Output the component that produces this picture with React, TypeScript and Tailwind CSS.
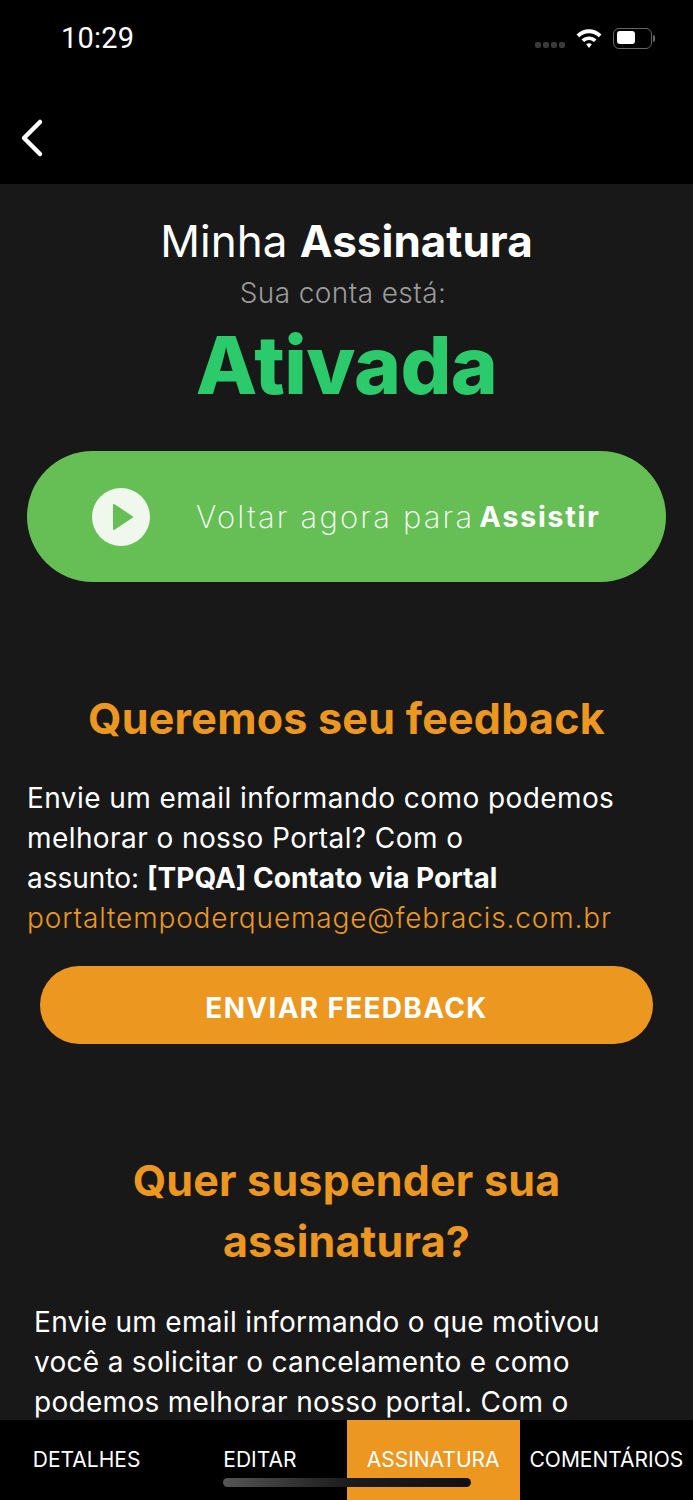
import React from 'react';

const tabs = ['DETALHES', 'EDITAR', 'ASSINATURA', 'COMENTÁRIOS'];

const StatusIcons = () => (
  <div className="flex items-center">
    <div className="flex gap-[2px] mt-[14px] mr-[10px]">
      {[0, 1, 2, 3].map((i) => (
        <div key={i} className="w-[6px] h-[6px] rounded-[2px] bg-[#3a3a3a]" />
      ))}
    </div>
    <svg width="28" height="24" viewBox="0 0 28 24" className="mr-[10px]">
      <path d="M1.5 8.5C8.5 1.5 19.5 1.5 26.5 8.5L23.8 11.3C18.2 5.9 9.8 5.9 4.2 11.3Z" fill="#fff" />
      <path d="M6.5 13.5C10.8 9.4 17.2 9.4 21.5 13.5L18.9 16.1C16 13.4 12 13.4 9.1 16.1Z" fill="#fff" />
      <path d="M11.2 18.2C12.9 16.8 15.1 16.8 16.8 18.2L14 22Z" fill="#fff" />
    </svg>
    <div className="box-border w-[39px] h-[21px] border-[1.5px] border-[#666] rounded-[6px] p-[2.5px]">
      <div className="w-[18px] h-[13px] rounded-[3px] bg-white" />
    </div>
    <div className="w-[2px] h-[7px] ml-[1px] bg-[#666] rounded-r-[2px]" />
  </div>
);

export default function App() {
  return (
    <div className="relative w-[693px] h-[1500px] flex flex-col overflow-hidden bg-[#181818] text-white font-['Inter','Liberation_Sans',sans-serif]">
      <header className="h-[184px] shrink-0 bg-black">
        <div className="flex items-center justify-between pt-[22px] pl-[61px] pr-[38px] h-[54px]">
          <span className="text-[29px] leading-[32px] tracking-[0.2px] font-['Roboto',sans-serif]">10:29</span>
          <StatusIcons />
        </div>
        <div className="pl-[18px] pt-[64px]">
          <svg width="30" height="40" viewBox="0 0 30 40" fill="none" stroke="#fff" strokeWidth="4.5" strokeLinecap="round" strokeLinejoin="round">
            <path d="M22 4L6 20L22 36" />
          </svg>
        </div>
      </header>

      <main className="flex-1 min-h-0 overflow-hidden">
        <div className="pt-[30px] text-center">
          <h1 className="text-[44px] leading-[54px]">
            Minha <span className="font-bold">Assinatura</span>
          </h1>
          <p className="mt-[7px] pr-[7px] text-[28px] leading-[36px] tracking-[0.4px] text-[#9a9a9a] font-light">Sua conta está:</p>
          <p className="mt-[2px] text-[80px] leading-[104px] font-extrabold tracking-[-0.6px] text-[#2bcb6c]">Ativada</p>
        </div>

        <button className="flex items-center ml-[27px] mt-[34px] w-[639px] h-[131px] rounded-full bg-[#65bf54] pl-[65px]">
          <span className="flex items-center justify-center w-[58px] h-[58px] rounded-full bg-[#f0f8ee]">
            <svg width="22" height="28" viewBox="0 0 22 28" className="ml-[3px]">
              <path d="M2 2L20 14L2 26Z" fill="#65bf54" stroke="#65bf54" strokeWidth="2" strokeLinejoin="round" />
            </svg>
          </span>
          <span className="ml-[46px] text-[31px] tracking-[2.2px] font-extralight leading-[40px]">Voltar agora para</span>
          <span className="ml-[5px] text-[29px] tracking-[1.6px] font-bold leading-[40px]">Assistir</span>
        </button>

        <h2 className="mt-[108px] text-center text-[43px] leading-[56px] font-bold tracking-[0.25px] text-[#ec9720]">Queremos seu feedback</h2>

        <p className="mt-[32px] px-[27px] text-[28px] leading-[40px] tracking-[0.42px]">
          Envie um email informando como podemos melhorar o nosso Portal? Com o
          <br />
          <span className="tracking-normal">assunto: </span>
          <span className="font-bold tracking-normal">[TPQA] Contato via Portal</span>
          <br />
          <span className="text-[#ec9720] font-light tracking-[0.86px]">portaltempoderquemage@febracis.com.br</span>
        </p>

        <button className="block mx-[40px] mt-[28px] w-[613px] h-[78px] rounded-full bg-[#ec9720] text-[28px] font-bold tracking-[1.3px] leading-[78px] pt-[3px]">
          ENVIAR FEEDBACK
        </button>

        <h2 className="mt-[106px] px-[60px] text-center text-[43px] leading-[61px] font-bold tracking-[0.2px] text-[#ec9720]">
          Quer suspender sua assinatura?
        </h2>

        <p className="mt-[30px] pl-[34px] pr-[40px] text-[28px] leading-[40px] tracking-[0.3px]">
          Envie um email informando o que motivou você a solicitar o cancelamento e como podemos melhorar nosso portal. Com o
        </p>
      </main>

      <nav className="h-[80px] shrink-0 grid grid-cols-4 bg-black">
        {tabs.map((t) => (
          <div
            key={t}
            className={`flex justify-center pt-[26px] text-[21px] leading-[28px] ${t === 'ASSINATURA' ? 'bg-[#ec9720]' : ''}`}
          >
            {t}
          </div>
        ))}
      </nav>
      <div className="absolute left-[223px] top-[1478px] w-[248px] h-[9px] rounded-full bg-gradient-to-r from-[#555] via-[#1c1c1c] to-[#111]" />
    </div>
  );
}
